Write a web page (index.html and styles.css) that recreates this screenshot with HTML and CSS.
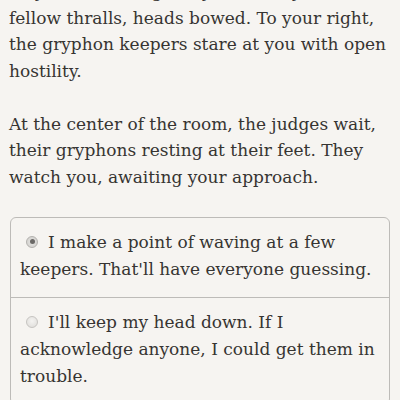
FILE: index.html
```html
<!DOCTYPE html>
<html lang="en">
<head>
<meta charset="utf-8">
<link rel="stylesheet" href="styles.css">
</head>
<body>
<main class="story">
  <p class="para first">To your left, the gallery is full of your</p>
  <p class="para">fellow thralls, heads bowed. To your right, the gryphon keepers stare at you with open hostility.</p>
  <p class="para">At the center of the room, the judges wait, their gryphons resting at their feet. They watch you, awaiting your approach.</p>
  <div class="choices">
    <label class="choice">
      <span class="radio checked"></span>I make a point of waving at a few keepers. That'll have everyone guessing.
    </label>
    <label class="choice">
      <span class="radio"></span>I'll keep my head down. If I acknowledge anyone, I could get them in trouble.
    </label>
  </div>
</main>
</body>
</html>
```
FILE: styles.css
```css
html, body {
  margin: 0;
  padding: 0;
  background: #f6f4f1;
  height: 100%;
  overflow: hidden;
}
.story {
  font-family: "DejaVu Serif", "Liberation Serif", serif;
  font-size: 17px;
  line-height: 26.5px;
  color: #363432;
  padding: 0 9px;
  margin-top: -22px;
}
.para {
  margin: 0 0 26.5px 0;
}
.para.first {
  margin: 0;
}
.choices {
  margin: 16px 1px 0 1px;
  border: 1px solid #bdbbb8;
  border-radius: 6px;
}
.choice {
  display: block;
  line-height: 27px;
  padding: 11px 12px 14px 9px;
}
.choice + .choice {
  border-top: 1px solid #bdbbb8;
}
.radio {
  display: inline-block;
  width: 12px;
  height: 12px;
  margin: 0 10px 0 6px;
  border-radius: 50%;
  background: radial-gradient(circle at 50% 40%, #f4f3f1 0%, #dddbd8 100%);
  border: 1px solid #c6c4c1;
  box-sizing: border-box;
  vertical-align: 0px;
  position: relative;
}
.radio.checked {
  background: radial-gradient(circle at 50% 50%, #e6e5e3 0%, #cfcdca 100%);
  border-color: #b3b1ae;
}
.radio.checked::after {
  content: "";
  position: absolute;
  left: 2.5px;
  top: 2.5px;
  width: 5px;
  height: 5px;
  border-radius: 50%;
  background: #6a6866;
}
```
